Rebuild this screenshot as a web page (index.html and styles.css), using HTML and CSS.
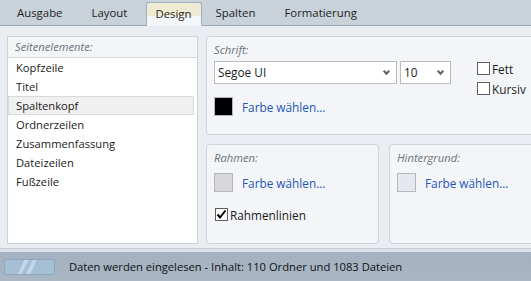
FILE: index.html
```html
<!DOCTYPE html>
<html>
<head>
    <meta charset="utf-8">
    <link rel="stylesheet" href="styles.css">
</head>
<body>
    <div class="tabs">
        <div class="tab">Ausgabe</div>
        <div class="tab">Layout</div>
        <div class="tab active">Design</div>
        <div class="tab">Spalten</div>
        <div class="tab">Formatierung</div>
    </div>

    <div class="main">
        <div class="list">
            <div class="list-head">Seitenelemente:</div>
            <div class="list-item">Kopfzeile</div>
            <div class="list-item">Titel</div>
            <div class="list-item selected">Spaltenkopf</div>
            <div class="list-item">Ordnerzeilen</div>
            <div class="list-item">Zusammenfassung</div>
            <div class="list-item">Dateizeilen</div>
            <div class="list-item">Fußzeile</div>
        </div>

        <div class="panels">
            <div class="group font-group">
                <div class="group-title">Schrift:</div>
                <div class="font-row">
                    <div class="select font-name">Segoe UI<span class="arrow"></span></div>
                    <div class="select font-size">10<span class="arrow"></span></div>
                    <div class="styles">
                        <label class="check"><span class="box"></span>Fett</label>
                        <label class="check"><span class="box"></span>Kursiv</label>
                    </div>
                </div>
                <div class="color-row">
                    <span class="swatch black"></span>
                    <a class="link">Farbe wählen...</a>
                </div>
            </div>

            <div class="group-row">
                <div class="group frame-group">
                    <div class="group-title">Rahmen:</div>
                    <div class="color-row">
                        <span class="swatch grey"></span>
                        <a class="link">Farbe wählen...</a>
                    </div>
                    <label class="check lines"><span class="box checked">
                        <svg width="11" height="11" viewBox="0 0 11 11"><path d="M1.5 5.5 L4 8.5 L9.5 1.5" fill="none" stroke="#000" stroke-width="2"/></svg>
                    </span>Rahmenlinien</label>
                </div>
                <div class="group bg-group">
                    <div class="group-title">Hintergrund:</div>
                    <div class="color-row">
                        <span class="swatch light"></span>
                        <a class="link">Farbe wählen...</a>
                    </div>
                </div>
            </div>
        </div>
    </div>

    <div class="statusbar">
        <div class="progress"></div>
        <span>Daten werden eingelesen - Inhalt: 110 Ordner und 1083 Dateien</span>
    </div>
</body>
</html>
```

FILE: styles.css
```css
* {
    box-sizing: border-box;
    margin: 0;
    padding: 0;
}

body {
    width: 531px;
    height: 281px;
    overflow: hidden;
    font-family: "Open Sans", "Noto Sans", sans-serif;
    font-size: 11.2px;
    color: #1b1b1b;
    background: #e9edf1;
}

/* tab strip */
.tabs {
    height: 26px;
    display: flex;
    align-items: flex-end;
    padding-left: 7px;
    background: #c9d1d9;
    border-bottom: 1px solid #98aec2;
}

.tab {
    height: 23px;
    padding: 0 10px;
    margin-right: 9px;
    line-height: 21px;
    font-size: 11.4px;
    color: #1e1e1e;
}

.tab.active {
    margin: 0 4px -1px 0;
    height: 24px;
    padding: 0 9px 0 8px;
    border: 1px solid #9cb1c5;
    border-bottom: none;
    border-radius: 3px 3px 0 0;
    background: linear-gradient(#f2ebd3 0%, #f1ead3 55%, #f4f6f8 56%, #f4f6f8 100%);
}

/* main area */
.main {
    display: flex;
    gap: 8px;
    padding: 10px 0 0 7px;
    height: 222px;
}

.list {
    width: 191px;
    height: 208px;
    background: #fff;
    border: 1px solid #ccd2d8;
}

.list-head {
    height: 21px;
    padding-left: 7px;
    line-height: 20px;
    font-style: italic;
    color: #6b7178;
    background: #f3f5f7;
    border-bottom: 1px solid #d4d9de;
}

.list-item {
    height: 19px;
    padding-left: 7px;
    line-height: 18px;
    border: 1px solid transparent;
    margin: 0 3px 0 0;
}

.list-item.selected {
    background: #f0f0f0;
    border-color: #dadada;
}

.panels {
    flex: 1;
    display: flex;
    flex-direction: column;
    gap: 9px;
}

.group {
    background: #f3f5f8;
    border: 1px solid #cdd3d9;
    border-radius: 4px;
    padding: 5px 7px 0;
}

.group-title {
    font-style: italic;
    color: #6b7178;
    height: 19px;
}

.font-group {
    height: 99px;
    margin-right: -10px;
}

.font-row {
    display: flex;
    align-items: flex-start;
    gap: 3px;
}

.select {
    position: relative;
    height: 23px;
    border: 1px solid #b8bcc0;
    background: #fff;
    padding-left: 3px;
    line-height: 20px;
    font-size: 11.8px;
}

.font-name {
    width: 183px;
}

.font-size {
    width: 51px;
}

.arrow {
    position: absolute;
    right: 7px;
    top: 7px;
    width: 5px;
    height: 5px;
    border-right: 2px solid #606060;
    border-bottom: 2px solid #606060;
    transform: rotate(45deg);
}

.styles {
    display: flex;
    flex-direction: column;
    gap: 7px;
    margin: 1px 0 0 23px;
}

.check {
    display: flex;
    align-items: center;
    gap: 2px;
    height: 13px;
    font-size: 11.8px;
}

.box {
    width: 13px;
    height: 13px;
    border: 1px solid #5f5f5f;
    background: #fff;
    display: flex;
    align-items: center;
    justify-content: center;
}

.color-row {
    display: flex;
    align-items: center;
    gap: 9px;
    margin-top: 2px;
}

.swatch {
    width: 19px;
    height: 19px;
    border: 1px solid #b4b8bc;
}

.swatch.black {
    background: #000;
}

.swatch.grey {
    background: #d8d8d8;
}

.swatch.light {
    background: #e4e7eb;
}

.link {
    color: #2456b8;
    font-size: 11.8px;
}

.group-row {
    display: flex;
    gap: 10px;
}

.frame-group {
    width: 173px;
    height: 100px;
}

.frame-group .color-row {
    margin-top: 4px;
}

.lines {
    margin: 16px 0 0 1px;
}

.bg-group {
    flex: 1;
    height: 100px;
    margin-right: -10px;
}

.bg-group .color-row {
    margin-top: 4px;
}

/* status bar */
.statusbar {
    height: 33px;
    display: flex;
    align-items: center;
    gap: 14px;
    padding: 3px 0 0 4px;
    border-top: 1px solid #c3ccd5;
    background: linear-gradient(#dce2e8 0, #dce2e8 3px, #a3b1c0 3px, #a9b6c4 100%);
    color: #111;
}

.progress {
    width: 51px;
    height: 16px;
    border: 1px solid #8ea7bd;
    border-radius: 2px;
    background: linear-gradient(115deg, #a5bfd5 0, #a5bfd5 35%, #c6d6e4 35%, #c6d6e4 42%, #a5bfd5 42%, #a5bfd5 50%, #c6d6e4 50%, #c6d6e4 57%, #a5bfd5 57%);
}
```
